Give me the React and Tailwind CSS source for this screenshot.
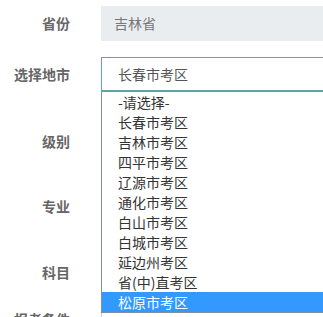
import React from 'react';

const cities = [
  '-请选择-',
  '长春市考区',
  '吉林市考区',
  '四平市考区',
  '辽源市考区',
  '通化市考区',
  '白山市考区',
  '白城市考区',
  '延边州考区',
  '省(中)直考区',
  '松原市考区',
];

const Label = ({ children }) => (
  <div className="w-[70px] shrink-0 text-right text-[14px] font-bold text-[#666]">{children}</div>
);

const Row = ({ label, className, children }) => (
  <div className={`flex items-center gap-[31px] ${className}`}>
    <Label>{label}</Label>
    <div className="flex-1 h-full">{children}</div>
  </div>
);

export default function App() {
  const selected = '松原市考区';

  return (
    <div
      className="relative w-[323px] h-[317px] overflow-hidden bg-white"
      style={{ fontFamily: '"Noto Sans CJK SC", "Noto Sans", sans-serif' }}
    >
      <div className="flex flex-col">
        <Row label="省份" className="mt-[6px] h-[35px]">
          <div className="h-full w-[240px] bg-[#eaedf0] flex items-center pl-[13px] text-[14px] text-[#777]">
            吉林省
          </div>
        </Row>

        <Row label="选择地市" className="mt-[16px] h-[34px]">
          <div className="relative h-full">
            <div className="h-full w-[240px] border border-[#5fa8a4] flex items-center pl-[16px] text-[14px] text-[#555]">
              长春市考区
            </div>
            <ul className="absolute left-0 top-[34px] w-[240px] z-10 bg-white border border-[#7f8fa4] text-[14px] text-[#333]">
              {cities.map((c) => (
                <li
                  key={c}
                  className={`h-[20px] leading-[20px] pl-[16px] ${
                    c === selected ? 'bg-[#3399ff] text-white' : ''
                  }`}
                >
                  {c}
                </li>
              ))}
            </ul>
          </div>
        </Row>

        <Row label="级别" className="mt-[33px] h-[34px]">
          <div className="h-full w-[240px] border border-[#ccc]" />
        </Row>

        <Row label="专业" className="mt-[31px] h-[34px]">
          <div className="h-full w-[240px] border border-[#ccc]" />
        </Row>

        <Row label="科目" className="mt-[32px] h-[34px]">
          <div className="h-full w-[240px] border border-[#ccc]" />
        </Row>

        <Row label="报考条件" className="mt-[20px] h-[34px] !items-start">
          <div className="h-full w-[240px] border border-[#ccc]" />
        </Row>
      </div>
    </div>
  );
}
